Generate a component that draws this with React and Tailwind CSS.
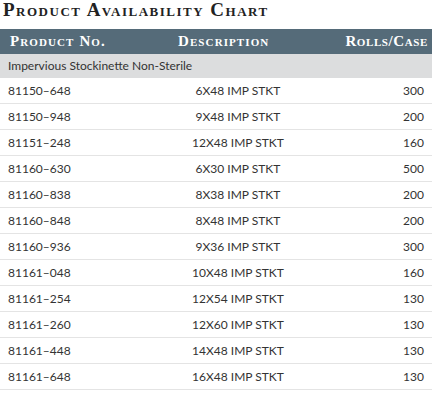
const rows = [
  ['81150–648', '6X48 IMP STKT', 300],
  ['81150–948', '9X48 IMP STKT', 200],
  ['81151–248', '12X48 IMP STKT', 160],
  ['81160–630', '6X30 IMP STKT', 500],
  ['81160–838', '8X38 IMP STKT', 200],
  ['81160–848', '8X48 IMP STKT', 200],
  ['81160–936', '9X36 IMP STKT', 300],
  ['81161–048', '10X48 IMP STKT', 160],
  ['81161–254', '12X54 IMP STKT', 130],
  ['81161–260', '12X60 IMP STKT', 130],
  ['81161–448', '14X48 IMP STKT', 130],
  ['81161–648', '16X48 IMP STKT', 130],
];

const serif = "font-['Liberation_Serif',serif] font-bold [font-variant:small-caps]";

export default function App() {
  return (
    <div className="w-[435px] h-[397px] bg-white font-['Lato',sans-serif] text-[#333]">
      {/* Title */}
      <h2 className={`${serif} h-[29px] pl-[3px] text-[19px] leading-[20px] text-[#222] tracking-[1.5px]`}>
        Product Availability Chart
      </h2>

      <div className="w-[432px]">
        {/* Header */}
        <div className={`${serif} grid grid-cols-[150px_176px_1fr] h-[25px] items-center bg-[#556b79] text-white text-[15px] leading-none tracking-[1.1px]`}>
          <div className="pl-[10px]">Product No.</div>
          <div className="pl-[28px]">Description</div>
          <div className="text-right pr-[4px] tracking-[0.6px]">Rolls/Case</div>
        </div>

        {/* Category */}
        <div className="h-[24px] flex items-center bg-[#dcddde] pl-[8px] text-[12px]">
          Impervious Stockinette Non-Sterile
        </div>

        {/* Rows */}
        {rows.map(([num, desc, qty]) => (
          <div
            key={num}
            className="grid grid-cols-[150px_176px_1fr] h-[26px] items-center border-b border-[#e4e4e4] text-[12px]"
          >
            <div className="pl-[8px]">{num}</div>
            <div className="text-center">{desc}</div>
            <div className="text-right pr-[8px]">{qty}</div>
          </div>
        ))}
      </div>
    </div>
  );
}
